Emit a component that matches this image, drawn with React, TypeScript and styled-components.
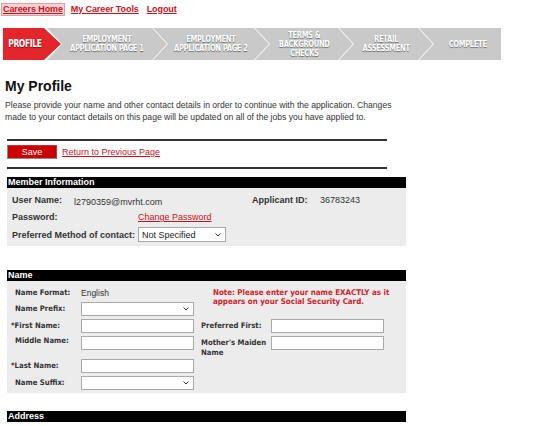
import React from "react";
import styled, { createGlobalStyle } from "styled-components";

const GlobalStyle = createGlobalStyle`
  body {
    margin: 0;
    background: #fff;
    font-family: "Liberation Sans", Arial, sans-serif;
    color: #333;
  }
`;

const Page = styled.div`
  padding-top: 3px;
  width: 550px;
`;

const TopLinks = styled.nav`
  display: flex;
  gap: 6px;
  padding-left: 2px;
  height: 12px;
  align-items: center;
`;

const TopLink = styled.a<{ $active?: boolean }>`
  font-size: 9px;
  font-weight: bold;
  color: #d0101c;
  text-decoration: underline;
  padding: 0 1px;
  line-height: 11px;
  letter-spacing: -0.1px;
  background: ${(p) => (p.$active ? "#f7d3d5" : "transparent")};
  outline: ${(p) => (p.$active ? "1px solid #e79aa0" : "none")};
`;

const Stepper = styled.div`
  display: flex;
  margin: 13px 0 0 3px;
  height: 32px;
  width: 497px;
`;

const DEPTH = 15;

const Step = styled.div<{ $w: number; $first?: boolean; $last?: boolean; $on?: boolean }>`
  flex: 0 0 ${(p) => p.$w}px;
  min-width: 0;
  margin-left: ${(p) => (p.$first ? 0 : -(DEPTH - 1))}px;
  background: ${(p) => (p.$on ? "#e3262b" : "#c9c9c9")};
  clip-path: ${(p) =>
    p.$last
      ? `polygon(0 0, 100% 0, 100% 100%, 0 100%, ${DEPTH}px 50%)`
      : p.$first
      ? `polygon(0 0, calc(100% - ${DEPTH + 2}px) 0, 100% 50%, calc(100% - ${DEPTH + 2}px) 100%, 0 100%)`
      : `polygon(0 0, calc(100% - ${DEPTH}px) 0, 100% 50%, calc(100% - ${DEPTH}px) 100%, 0 100%, ${DEPTH}px 50%)`};
  display: flex;
  align-items: center;
  justify-content: center;
  padding: ${(p) => (p.$first ? `0 ${DEPTH}px 0 0` : p.$last ? `0 0 0 ${DEPTH}px` : `0 ${DEPTH}px`)};
  box-sizing: border-box;
`;

const StepText = styled.div<{ $big?: boolean }>`
  font-family: "DejaVu Sans Condensed", "DejaVu Sans", sans-serif;
  font-stretch: condensed;
  font-weight: bold;
  font-size: ${(p) => (p.$big ? 10 : 9)}px;
  line-height: ${(p) => (p.$big ? 10 : 9)}px;
  letter-spacing: -0.4px;
  white-space: nowrap;
  color: #fff;
  text-align: center;
  text-transform: uppercase;
  text-shadow: 0 1px 1px rgba(0, 0, 0, 0.45);
  transform: scaleX(0.84);
`;

const Title = styled.h1`
  margin: 18px 0 0 5px;
  font-size: 14px;
  line-height: 16px;
  font-weight: bold;
  color: #111;
`;

const Intro = styled.p`
  margin: 5px 0 16px 5px;
  width: 396px;
  font-size: 8.6px;
  line-height: 12px;
  color: #333;
`;

const Rule = styled.hr`
  margin: 0 0 0 7px;
  width: 380px;
  height: 2px;
  border: none;
  background: #333;
`;

const Toolbar = styled.div`
  display: flex;
  align-items: center;
  gap: 5px;
  margin: 4px 0 8px 7px;
`;

const SaveButton = styled.button`
  width: 50px;
  height: 14px;
  padding: 0;
  background: #cc0000;
  border: 1px solid #8c8c8c;
  border-top-color: #c33;
  border-right-color: #c33;
  color: #fff;
  font-family: "Liberation Sans", Arial, sans-serif;
  font-size: 9px;
  line-height: 12px;
`;

const TextLink = styled.a`
  font-size: 9px;
  color: #d0101c;
  text-decoration: underline;
`;

const Section = styled.section<{ $mt: number }>`
  margin: ${(p) => p.$mt}px 0 0 7px;
  width: 399px;
`;

const SectionHeader = styled.div`
  background: #000;
  color: #fff;
  font-size: 9px;
  font-weight: bold;
  line-height: 11px;
  height: 11px;
  padding-left: 1px;
`;

const Panel = styled.div`
  background: #ececec;
`;

const MemberGrid = styled.div`
  display: grid;
  grid-template-columns: 62px 64px 114px 68px 1fr;
  grid-template-rows: 14px 14px 15px;
  row-gap: 3px;
  align-items: center;
  padding: 5px 0 4px 5px;
  font-size: 9px;
`;

const Label = styled.span<{ $span?: number }>`
  grid-column: span ${(p) => p.$span ?? 1};
  font-weight: bold;
  color: #333;
`;

const Value = styled.span<{ $span?: number; $drop?: number }>`
  grid-column: span ${(p) => p.$span ?? 1};
  color: #333;
  position: relative;
  top: ${(p) => p.$drop ?? 0}px;
`;

const Cell = styled.div<{ $span?: number }>`
  grid-column: span ${(p) => p.$span ?? 1};
  display: flex;
`;

const SelectWrap = styled.div<{ $w: number; $h: number }>`
  position: relative;
  width: ${(p) => p.$w}px;
  height: ${(p) => p.$h}px;
`;

const Select = styled.select`
  appearance: none;
  width: 100%;
  height: 100%;
  box-sizing: border-box;
  border: 1px solid #a9a9a9;
  background: #fff;
  font-family: "Liberation Sans", Arial, sans-serif;
  font-size: 9px;
  color: #222;
  padding: 0 0 0 3px;
  border-radius: 0;
`;

const Chevron = styled.svg`
  position: absolute;
  right: 5px;
  top: 50%;
  margin-top: -2px;
  width: 6px;
  height: 4px;
  pointer-events: none;
`;

const Input = styled.input`
  width: 113px;
  height: 14px;
  box-sizing: border-box;
  border: 1px solid #a9a9a9;
  background: #fff;
  padding: 0 2px;
  font-size: 9px;
  border-radius: 0;
`;

const NameGrid = styled.div`
  display: grid;
  grid-template-columns: 69px 113px 77px 113px;
  grid-template-rows: 12px 14px 14px 20px 14px 14px;
  row-gap: 3px;
  align-items: center;
  padding: 6px 0 3px 5px;
  font-family: "DejaVu Sans Condensed", "DejaVu Sans", sans-serif;
  font-stretch: condensed;
  font-size: 7.7px;
`;

const NameLabel = styled.span<{ $req?: boolean; $top?: boolean }>`
  font-weight: bold;
  color: #333;
  padding-left: ${(p) => (p.$req ? 0 : 3)}px;
  margin-left: ${(p) => (p.$req ? -1 : 0)}px;
  align-self: ${(p) => (p.$top ? "start" : "center")};
  line-height: 10px;
`;

const RightLabel = styled(NameLabel)`
  padding-left: 7px;
  margin-top: ${(p) => (p.$top ? 2 : 0)}px;
`;

const NameValue = styled.span`
  color: #333;
  font-size: 8.5px;
  font-family: "Liberation Sans", Arial, sans-serif;
`;

const Note = styled.div`
  grid-column: 3 / span 2;
  grid-row: 1 / span 2;
  align-self: start;
  padding-left: 19px;
  color: #d4202a;
  font-weight: bold;
  font-size: 7.9px;
  line-height: 9px;
  margin-top: 1px;
  white-space: nowrap;
`;

const Field = styled.div<{ $top?: boolean; $span?: number }>`
  grid-column: span ${(p) => p.$span ?? 1};
  align-self: ${(p) => (p.$top ? "start" : "center")};
  display: flex;
`;

function Dropdown({ w, h, value }: { w: number; h: number; value?: string }) {
  return (
    <SelectWrap $w={w} $h={h}>
      <Select defaultValue={value ?? ""}>
        <option value={value ?? ""}>{value ?? ""}</option>
      </Select>
      <Chevron viewBox="0 0 6 4">
        <path d="M0.5 0.5 L3 3 L5.5 0.5" fill="none" stroke="#333" strokeWidth="1" />
      </Chevron>
    </SelectWrap>
  );
}

const steps = [
  { w: 58, lines: ["Profile"], on: true },
  { w: 120, lines: ["Employment", "Application Page 1"] },
  { w: 116, lines: ["Employment", "Application Page 2"] },
  { w: 98, lines: ["Terms &", "Background", "Checks"] },
  { w: 94, lines: ["Retail", "Assessment"] },
  { w: 82, lines: ["Complete"] },
];

function App() {
  return (
    <Page>
      <GlobalStyle />
      <TopLinks>
        <TopLink href="#" $active>
          Careers Home
        </TopLink>
        <TopLink href="#">My Career Tools</TopLink>
        <TopLink href="#">Logout</TopLink>
      </TopLinks>

      <Stepper>
        {steps.map((s, i) => (
          <Step key={i} $w={s.w} $first={i === 0} $last={i === steps.length - 1} $on={s.on}>
            <StepText $big={s.on}>
              {s.lines.map((l, j) => (
                <div key={j}>{l}</div>
              ))}
            </StepText>
          </Step>
        ))}
      </Stepper>

      <Title>My Profile</Title>
      <Intro>
        Please provide your name and other contact details in order to continue with the application. Changes
        made to your contact details on this page will be updated on all of the jobs you have applied to.
      </Intro>

      <Rule />
      <Toolbar>
        <SaveButton>Save</SaveButton>
        <TextLink href="#">Return to Previous Page</TextLink>
      </Toolbar>
      <Rule />

      <Section $mt={8}>
        <SectionHeader>Member Information</SectionHeader>
        <Panel>
          <MemberGrid>
            <Label>User Name:</Label>
            <Value $span={2} $drop={2}>
              l2790359@mvrht.com
            </Value>
            <Label>Applicant ID:</Label>
            <Value>36783243</Value>

            <Label $span={2}>Password:</Label>
            <Cell $span={3}>
              <TextLink href="#">Change Password</TextLink>
            </Cell>

            <Label $span={2}>Preferred Method of contact:</Label>
            <Cell $span={3}>
              <Dropdown w={88} h={15} value="Not Specified" />
            </Cell>
          </MemberGrid>
        </Panel>
      </Section>

      <Section $mt={24}>
        <SectionHeader>Name</SectionHeader>
        <Panel>
          <NameGrid>
            <NameLabel>Name Format:</NameLabel>
            <NameValue>English</NameValue>
            <Note>
              Note: Please enter your name EXACTLY as it
              <br />
              appears on your Social Security Card.
            </Note>

            <NameLabel>Name Prefix:</NameLabel>
            <Field>
              <Dropdown w={113} h={14} />
            </Field>

            <NameLabel $req>*First Name:</NameLabel>
            <Field>
              <Input />
            </Field>
            <RightLabel>Preferred First:</RightLabel>
            <Field>
              <Input />
            </Field>

            <NameLabel $top>Middle Name:</NameLabel>
            <Field $top>
              <Input />
            </Field>
            <RightLabel $top>
              Mother's Maiden
              <br />
              Name
            </RightLabel>
            <Field $top>
              <Input />
            </Field>

            <NameLabel $req>*Last Name:</NameLabel>
            <Field $span={3}>
              <Input />
            </Field>

            <NameLabel>Name Suffix:</NameLabel>
            <Field>
              <Dropdown w={113} h={14} />
            </Field>
          </NameGrid>
        </Panel>
      </Section>

      <Section $mt={18}>
        <SectionHeader>Address</SectionHeader>
      </Section>
    </Page>
  );
}

export default App;
